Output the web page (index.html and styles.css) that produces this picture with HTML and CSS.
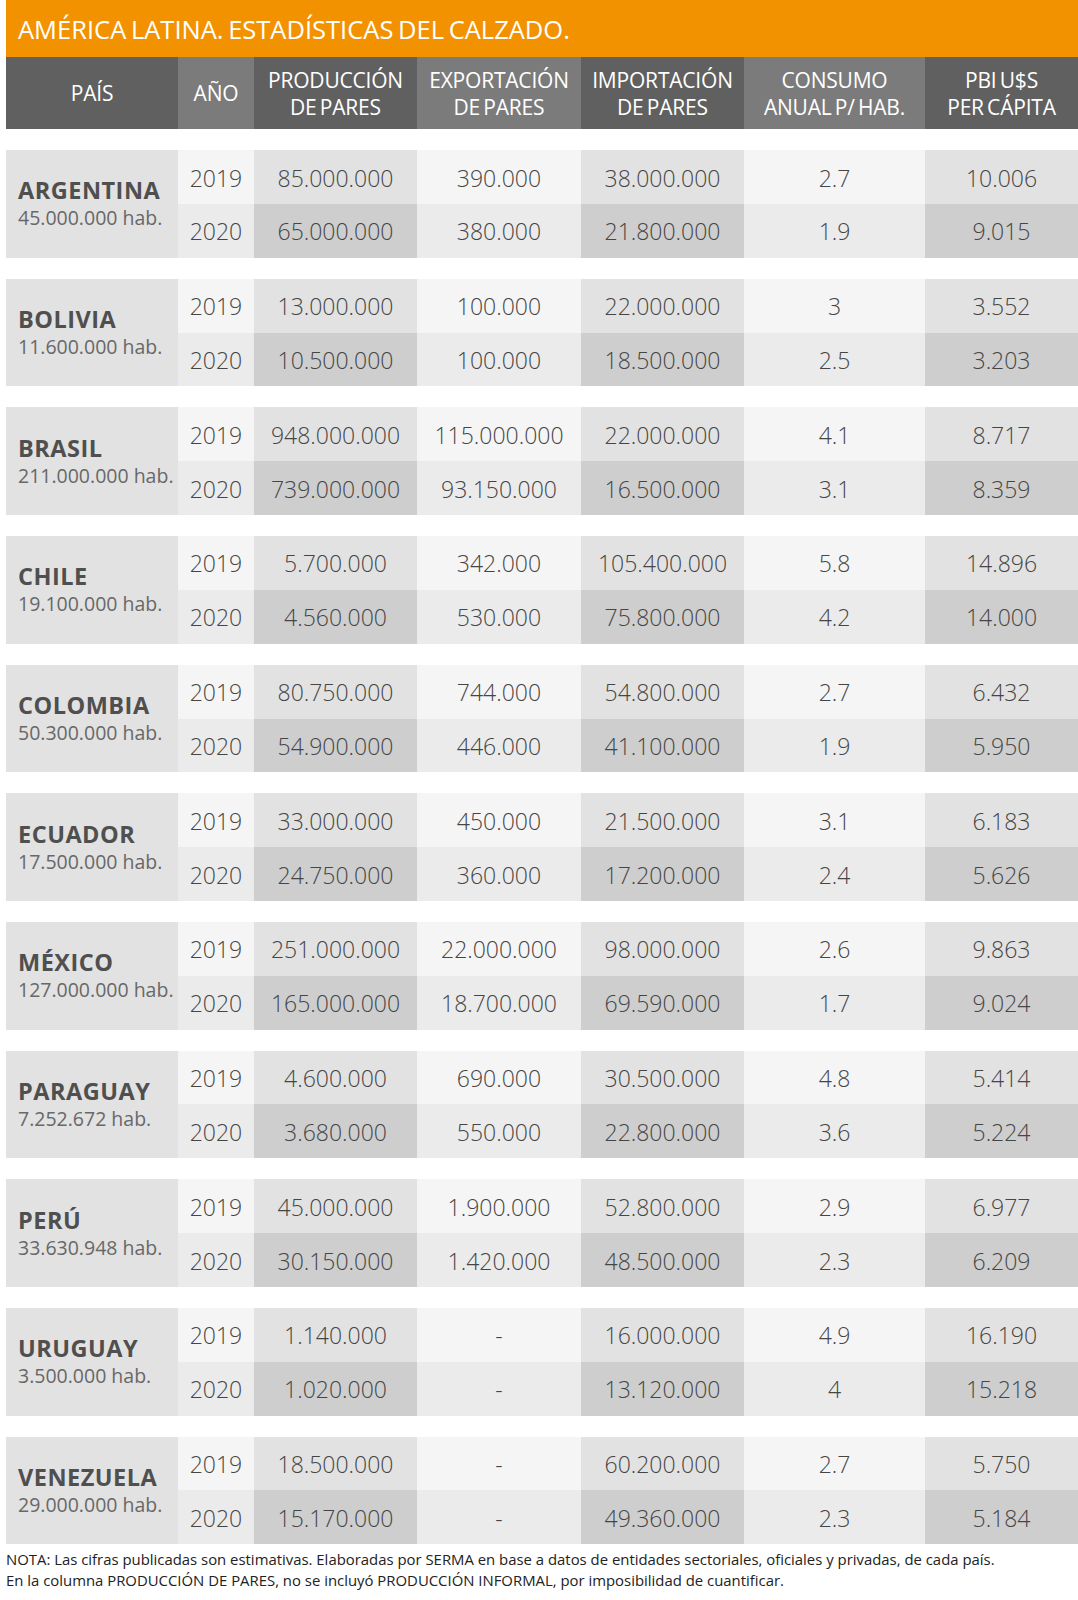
FILE: index.html
```html
<!DOCTYPE html>
<html lang="es">
<head>
<meta charset="utf-8">
<title>América Latina. Estadísticas del calzado.</title>
<link rel="stylesheet" href="styles.css">
</head>
<body>
<div class="page">
  <div class="title">AMÉRICA LATINA. ESTADÍSTICAS DEL CALZADO.</div>
  <div class="grid head">
    <div class="hc dark">PAÍS</div>
    <div class="hc light">AÑO</div>
    <div class="hc dark">PRODUCCIÓN<br>DE PARES</div>
    <div class="hc light">EXPORTACIÓN<br>DE PARES</div>
    <div class="hc dark">IMPORTACIÓN<br>DE PARES</div>
    <div class="hc light">CONSUMO<br>ANUAL P/ HAB.</div>
    <div class="hc dark">PBI U$S<br>PER CÁPITA</div>
  </div>

  <div class="grid block">
    <div class="country"><span class="name">ARGENTINA</span><span class="pop">45.000.000 hab.</span></div>
    <div class="c a1">2019</div><div class="c b1">85.000.000</div><div class="c a1">390.000</div><div class="c b1">38.000.000</div><div class="c a1">2.7</div><div class="c b1">10.006</div>
    <div class="c a2">2020</div><div class="c b2">65.000.000</div><div class="c a2">380.000</div><div class="c b2">21.800.000</div><div class="c a2">1.9</div><div class="c b2">9.015</div>
  </div>

  <div class="grid block">
    <div class="country"><span class="name">BOLIVIA</span><span class="pop">11.600.000 hab.</span></div>
    <div class="c a1">2019</div><div class="c b1">13.000.000</div><div class="c a1">100.000</div><div class="c b1">22.000.000</div><div class="c a1">3</div><div class="c b1">3.552</div>
    <div class="c a2">2020</div><div class="c b2">10.500.000</div><div class="c a2">100.000</div><div class="c b2">18.500.000</div><div class="c a2">2.5</div><div class="c b2">3.203</div>
  </div>

  <div class="grid block">
    <div class="country"><span class="name">BRASIL</span><span class="pop">211.000.000 hab.</span></div>
    <div class="c a1">2019</div><div class="c b1">948.000.000</div><div class="c a1">115.000.000</div><div class="c b1">22.000.000</div><div class="c a1">4.1</div><div class="c b1">8.717</div>
    <div class="c a2">2020</div><div class="c b2">739.000.000</div><div class="c a2">93.150.000</div><div class="c b2">16.500.000</div><div class="c a2">3.1</div><div class="c b2">8.359</div>
  </div>

  <div class="grid block">
    <div class="country"><span class="name">CHILE</span><span class="pop">19.100.000 hab.</span></div>
    <div class="c a1">2019</div><div class="c b1">5.700.000</div><div class="c a1">342.000</div><div class="c b1">105.400.000</div><div class="c a1">5.8</div><div class="c b1">14.896</div>
    <div class="c a2">2020</div><div class="c b2">4.560.000</div><div class="c a2">530.000</div><div class="c b2">75.800.000</div><div class="c a2">4.2</div><div class="c b2">14.000</div>
  </div>

  <div class="grid block">
    <div class="country"><span class="name">COLOMBIA</span><span class="pop">50.300.000 hab.</span></div>
    <div class="c a1">2019</div><div class="c b1">80.750.000</div><div class="c a1">744.000</div><div class="c b1">54.800.000</div><div class="c a1">2.7</div><div class="c b1">6.432</div>
    <div class="c a2">2020</div><div class="c b2">54.900.000</div><div class="c a2">446.000</div><div class="c b2">41.100.000</div><div class="c a2">1.9</div><div class="c b2">5.950</div>
  </div>

  <div class="grid block">
    <div class="country"><span class="name">ECUADOR</span><span class="pop">17.500.000 hab.</span></div>
    <div class="c a1">2019</div><div class="c b1">33.000.000</div><div class="c a1">450.000</div><div class="c b1">21.500.000</div><div class="c a1">3.1</div><div class="c b1">6.183</div>
    <div class="c a2">2020</div><div class="c b2">24.750.000</div><div class="c a2">360.000</div><div class="c b2">17.200.000</div><div class="c a2">2.4</div><div class="c b2">5.626</div>
  </div>

  <div class="grid block">
    <div class="country"><span class="name">MÉXICO</span><span class="pop">127.000.000 hab.</span></div>
    <div class="c a1">2019</div><div class="c b1">251.000.000</div><div class="c a1">22.000.000</div><div class="c b1">98.000.000</div><div class="c a1">2.6</div><div class="c b1">9.863</div>
    <div class="c a2">2020</div><div class="c b2">165.000.000</div><div class="c a2">18.700.000</div><div class="c b2">69.590.000</div><div class="c a2">1.7</div><div class="c b2">9.024</div>
  </div>

  <div class="grid block">
    <div class="country"><span class="name">PARAGUAY</span><span class="pop">7.252.672 hab.</span></div>
    <div class="c a1">2019</div><div class="c b1">4.600.000</div><div class="c a1">690.000</div><div class="c b1">30.500.000</div><div class="c a1">4.8</div><div class="c b1">5.414</div>
    <div class="c a2">2020</div><div class="c b2">3.680.000</div><div class="c a2">550.000</div><div class="c b2">22.800.000</div><div class="c a2">3.6</div><div class="c b2">5.224</div>
  </div>

  <div class="grid block">
    <div class="country"><span class="name">PERÚ</span><span class="pop">33.630.948 hab.</span></div>
    <div class="c a1">2019</div><div class="c b1">45.000.000</div><div class="c a1">1.900.000</div><div class="c b1">52.800.000</div><div class="c a1">2.9</div><div class="c b1">6.977</div>
    <div class="c a2">2020</div><div class="c b2">30.150.000</div><div class="c a2">1.420.000</div><div class="c b2">48.500.000</div><div class="c a2">2.3</div><div class="c b2">6.209</div>
  </div>

  <div class="grid block">
    <div class="country"><span class="name">URUGUAY</span><span class="pop">3.500.000 hab.</span></div>
    <div class="c a1">2019</div><div class="c b1">1.140.000</div><div class="c a1">-</div><div class="c b1">16.000.000</div><div class="c a1">4.9</div><div class="c b1">16.190</div>
    <div class="c a2">2020</div><div class="c b2">1.020.000</div><div class="c a2">-</div><div class="c b2">13.120.000</div><div class="c a2">4</div><div class="c b2">15.218</div>
  </div>

  <div class="grid block">
    <div class="country"><span class="name">VENEZUELA</span><span class="pop">29.000.000 hab.</span></div>
    <div class="c a1">2019</div><div class="c b1">18.500.000</div><div class="c a1">-</div><div class="c b1">60.200.000</div><div class="c a1">2.7</div><div class="c b1">5.750</div>
    <div class="c a2">2020</div><div class="c b2">15.170.000</div><div class="c a2">-</div><div class="c b2">49.360.000</div><div class="c a2">2.3</div><div class="c b2">5.184</div>
  </div>

  <p class="note">NOTA: Las cifras publicadas son estimativas. Elaboradas por SERMA en base a datos de entidades sectoriales, oficiales y privadas, de cada país.<br>En la columna PRODUCCIÓN DE PARES, no se incluyó PRODUCCIÓN INFORMAL, por imposibilidad de cuantificar.</p>
</div>
</body>
</html>
```

FILE: styles.css
```css
html, body {
  margin: 0;
  padding: 0;
  background: #ffffff;
}

body {
  font-family: "Open Sans", "Noto Sans", "Liberation Sans", sans-serif;
}

.page {
  margin-left: 6px;
  width: 1072px;
}

.title {
  height: 57.3px;
  box-sizing: border-box;
  background: #f39200;
  color: #ffffff;
  font-size: 25.5px;
  line-height: 58px;
  padding-left: 12px;
  word-spacing: -2px;
  white-space: nowrap;
}

.grid {
  display: grid;
  grid-template-columns: 172px 76px 163px 164px 163px 181px 153px;
}

.head {
  height: 71.7px;
}

.hc {
  display: flex;
  align-items: center;
  justify-content: center;
  text-align: center;
  color: #ffffff;
  font-size: 21px;
  line-height: 26.6px;
  letter-spacing: -0.2px;
  word-spacing: -2px;
  white-space: nowrap;
  padding-top: 1px;
}

.dark { background: #606060; }
.light { background: #7b7b7b; }

.block {
  margin-top: 21.17px;
  grid-template-rows: 53.75px 53.75px;
}

.country {
  grid-row: 1 / span 2;
  background: #e2e2e2;
  display: flex;
  flex-direction: column;
  justify-content: center;
  padding-left: 12px;
  padding-top: 1px;
  white-space: nowrap;
}

.name {
  font-size: 23.5px;
  font-weight: 700;
  line-height: 27px;
  letter-spacing: 0.5px;
  color: #4f4f4f;
}

.pop {
  font-size: 19.5px;
  line-height: 27px;
  color: #686868;
}

.c {
  display: flex;
  align-items: center;
  justify-content: center;
  font-size: 23px;
  font-weight: 300;
  color: #454545;
  padding-top: 1px;
  box-sizing: border-box;
}

.a1 { background: #f5f5f5; }
.a2 { background: #ebebeb; }
.b1 { background: #e2e2e2; }
.b2 { background: #cecece; }

.note {
  margin: 5px 0 0 0;
  font-size: 14.9px;
  line-height: 20.7px;
  color: #222222;
  white-space: nowrap;
}
```
